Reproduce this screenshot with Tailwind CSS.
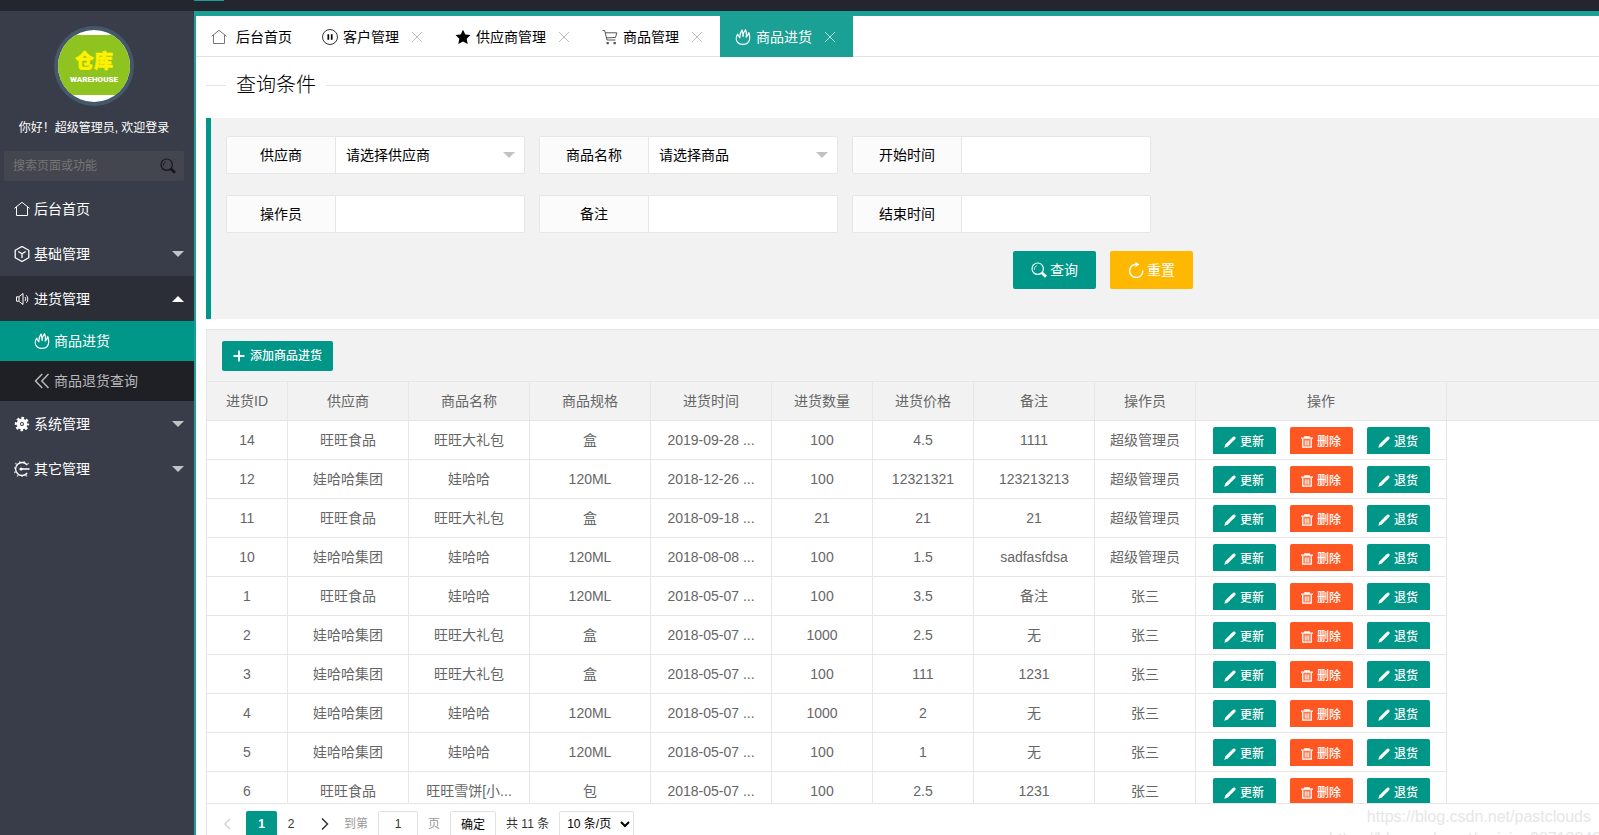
<!DOCTYPE html>
<html lang="zh-CN">
<head>
    <meta charset="UTF-8">
    <meta name="viewport" content="width=device-width, initial-scale=1.0">
    <title>商品进货</title>
    <script src="https://cdn.jsdelivr.net/npm/@tailwindcss/browser@4"></script>
</head>
<body class="relative h-screen flex flex-col overflow-hidden bg-white text-sm text-black font-['Liberation_Sans','Noto_Sans_CJK_SC',sans-serif]">
    <!-- Icons -->
    <svg class="hidden">
        <symbol id="i-home" viewBox="0 0 16 16"><path d="M.5 7.300 8 1.300l7.500 6M2.500 6v8.500h11V6"/></symbol>
        <symbol id="i-pause" viewBox="0 0 16 16"><circle cx="8" cy="8" r="7.500" stroke-width=".8"/><path d="M6.300 5.200v5.600M9.700 5.200v5.600" stroke-width="1.700"/></symbol>
        <symbol id="i-star" viewBox="0 0 16 16"><path fill="currentColor" stroke="none" d="m8 .8 2.300 4.700 5.200.6-3.800 3.600 1 5.300L8 12.400 3.300 15l1-5.300L.5 6.100l5.200-.6z"/></symbol>
        <symbol id="i-cart" viewBox="0 0 16 16"><path d="M.5 1.500h2.200l2.300 9.500h8.500M3.300 3.800h11.500l-1.300 4.700-9 .4"/><path d="M4.500 13h2.300v2.200H4.500zM11.500 13h2.300v2.200h-2.300z" fill="currentColor" stroke="none"/></symbol>
        <symbol id="i-fire" viewBox="0 0 16 16"><path stroke-width="1.200" stroke-linejoin="round" d="M2.800 5.200C.6 8.200.8 11.700 3 13.700c2.600 2.300 7.400 2.300 9.900 0 2.200-2.200 2.200-6.200.9-10.200-.6 2-1.400 3.500-2.600 4.700.5-3.200.3-5.500-.7-7.500C9 2.400 8.300 4.600 8.100 7.400 7.900 5.200 7.600 3 7.200 1 5.500 3 4.700 5.800 4.900 8.800 3.700 7.900 2.900 6.600 2.800 5.200z"/></symbol>
        <symbol id="i-close" viewBox="0 0 12 12"><path d="m1 1 10 10M11 1 1 11"/></symbol>
        <symbol id="i-cube" viewBox="0 0 16 16"><path stroke-width="1.300" stroke-linejoin="round" d="m8 .5 6.800 3.700v7.600L8 15.500l-6.800-3.700V4.200zM4.300 5.500 8 7.800l3.700-2.300M8 7.800V12"/></symbol>
        <symbol id="i-sound" viewBox="0 0 16 16"><path d="M2.500 5.800v4.400h2.300L9 13.500v-11L4.800 5.800zM5 6v4M11 6c1 1 1 3 0 4M12.300 4.300c2 2 2 5.400 0 7.400"/></symbol>
        <symbol id="i-back" viewBox="0 0 16 16"><path stroke-width="1.500" d="M8.200 1 1.500 8l6.700 7M14.500 1 7.800 8l6.700 7"/></symbol>
        <symbol id="i-gear" viewBox="0 0 16 16"><circle cx="8" cy="8" r="3.700" stroke-width="3.400"/><circle cx="8" cy="8" r="6" stroke-width="2.400" stroke-dasharray="2.600 2.110" stroke-dashoffset="1.300"/><circle cx="8" cy="8" r="1" fill="currentColor" stroke="none"/></symbol>
        <symbol id="i-other" viewBox="0 0 16 16"><path stroke-width="1.300" d="M13.200 4A6.500 6.500 0 1 0 13.200 12M7 8h8.500"/><circle cx="7" cy="8" r="1.600" fill="currentColor" stroke="none"/><path stroke-width="2" stroke-dasharray="1.500 3" d="M14.500 3.200A8 8 0 1 0 14.500 12.800" stroke-opacity=".6"/></symbol>
        <symbol id="i-search" viewBox="0 0 16 16"><circle cx="6.700" cy="6.700" r="5.700" stroke-width="1.200"/><path d="M3.600 7.800C3.200 6 4.100 4.300 5.800 3.700" stroke-width=".9"/><path d="m10.800 10.800 4.200 4" stroke-width="2.800"/></symbol>
        <symbol id="i-refresh" viewBox="0 0 16 16"><path stroke-width="1.400" d="M14.800 8.500A6.600 6.600 0 1 1 8.500 2.300"/><path d="m7.500 0 4 2.400-4 2.500z" fill="currentColor" stroke="none"/></symbol>
        <symbol id="i-plus" viewBox="0 0 12 12"><path stroke-width="1.800" d="M6 .5v11M.5 6h11"/></symbol>
        <symbol id="i-edit" viewBox="0 0 12 12"><path fill="currentColor" stroke="none" d="M.3 11.700 1.300 8.500 8 1.800C9 .9 9.600.5 10.400.5c.8.200 1.200.8 1.200 1.400 0 .7-.5 1.300-1.300 2.100L3.500 10.700z"/></symbol>
        <symbol id="i-trash" viewBox="0 0 12 12"><path d="M0 2.200h12M3.800 2V.8h4.400V2" stroke-width="1.300"/><path d="M1.700 2.700v8.500h8.600V2.700" fill="currentColor" fill-opacity=".2" stroke-width="1.200"/><path d="M4.300 4.500v5M6 4.500v5M7.700 4.500v5" stroke-width=".9"/></symbol>
        <symbol id="i-left" viewBox="0 0 8 14"><path stroke-width="1.500" d="M7 2 2 7l5 5"/></symbol>
        <symbol id="i-right" viewBox="0 0 8 14"><path stroke-width="1.500" d="m1 1.500 5.500 5.500L1 12.500"/></symbol>
        <symbol id="i-down" viewBox="0 0 12 6"><path fill="currentColor" stroke="none" d="M0 0h12L6 6z"/></symbol>
        <symbol id="i-up" viewBox="0 0 12 6"><path fill="currentColor" stroke="none" d="M0 6h12L6 0z"/></symbol>
    </svg>

    <!-- Top bar -->
    <header class="h-[11px] shrink-0 bg-[#23262e]">
        <div class="ml-[194px] w-[30px] h-px bg-[#1aa094]"></div>
    </header>

    <div class="flex flex-1 min-h-0">
        <!-- Side menu -->
        <aside class="w-[194px] shrink-0 bg-[#393d49] text-white">
            <div class="h-[175px] pl-1 pr-2.5 pt-[15px] flex flex-col items-center">
                <svg class="w-20 h-20 shrink-0" viewBox="0 0 80 80">
                    <defs><clipPath id="face"><circle cx="40" cy="40" r="36"/></clipPath></defs>
                    <circle cx="40" cy="40" r="40" fill="#44576b"/>
                    <g clip-path="url(#face)">
                        <rect width="80" height="80" fill="#fff"/>
                        <rect y="9" width="80" height="60" fill="#8fc31f"/>
                    </g>
                    <text x="40" y="42" text-anchor="middle" font-size="19" font-weight="900" fill="#fff100" stroke="#fff100" stroke-width=".5" font-family="Noto Sans CJK SC">仓库</text>
                    <text x="40" y="56" text-anchor="middle" font-size="8" font-weight="900" fill="#fff" font-family="Roboto">WAREHOUSE</text>
                </svg>
                <p class="mt-3 text-xs leading-5">你好！超级管理员, 欢迎登录</p>
                <div class="mt-[13px] w-full h-[30px] shrink-0 flex items-center rounded-xs bg-[#43464f] pr-2">
                    <input type="text" aria-label="搜索页面或功能" placeholder="搜索页面或功能" class="flex-1 min-w-0 h-full pl-[9px] text-xs outline-none placeholder:text-[#757575]">
                    <button type="button" aria-label="搜索" class="text-[#16171b]"><svg class="w-4 h-4 fill-none stroke-current"><use href="#i-search"/></svg></button>
                </div>
            </div>
            <nav>
                <a href="#" class="flex items-center h-[45px] pl-3.5 pr-2.5"><svg class="w-4 h-4 mr-1 fill-none stroke-current"><use href="#i-home"/></svg>后台首页</a>
                <a href="#" class="flex items-center h-[45px] pl-3.5 pr-2.5"><svg class="w-4 h-4 mr-1 fill-none stroke-current"><use href="#i-cube"/></svg>基础管理<svg class="w-3 h-1.5 ml-auto text-[#c2c3c6]"><use href="#i-down"/></svg></a>
                <a href="#" class="flex items-center h-[45px] pl-3.5 pr-2.5 bg-[#2b2e37]"><svg class="w-4 h-4 mr-1 fill-none stroke-current"><use href="#i-sound"/></svg>进货管理<svg class="w-3 h-1.5 ml-auto"><use href="#i-up"/></svg></a>
                <a href="#" class="flex items-center h-10 pl-[34px] bg-[#009688]"><svg class="w-4 h-4 mr-1 fill-none stroke-current"><use href="#i-fire"/></svg>商品进货</a>
                <a href="#" class="flex items-center h-10 pl-[34px] bg-[#1f2025] text-[#b8b8ba]"><svg class="w-4 h-4 mr-1 fill-none stroke-current"><use href="#i-back"/></svg>商品退货查询</a>
                <a href="#" class="flex items-center h-[45px] pl-3.5 pr-2.5"><svg class="w-4 h-4 mr-1 fill-none stroke-current"><use href="#i-gear"/></svg>系统管理<svg class="w-3 h-1.5 ml-auto text-[#c2c3c6]"><use href="#i-down"/></svg></a>
                <a href="#" class="flex items-center h-[45px] pl-3.5 pr-2.5"><svg class="w-4 h-4 mr-1 fill-none stroke-current"><use href="#i-other"/></svg>其它管理<svg class="w-3 h-1.5 ml-auto text-[#c2c3c6]"><use href="#i-down"/></svg></a>
            </nav>
        </aside>

        <main class="flex-1 min-w-0 flex flex-col border-l-2 border-t-5 border-[#1aa094]">
            <!-- Page tabs -->
            <div class="flex h-[41px] shrink-0 border-b border-[#e2e2e2]">
                <a href="#" class="flex items-center h-[41px] px-[15px]"><svg class="w-4 h-4 mr-[9px] fill-none stroke-[#777]"><use href="#i-home"/></svg>后台首页</a>
                <div class="flex items-center h-[41px] pl-[15px] pr-[17px]"><svg class="w-4 h-4 mr-[5px] fill-none stroke-current"><use href="#i-pause"/></svg><a href="#">客户管理</a><button type="button" aria-label="关闭" class="ml-3"><svg class="w-3 h-3 fill-none stroke-[#bbb]"><use href="#i-close"/></svg></button></div>
                <div class="flex items-center h-[41px] pl-[15px] pr-[17px]"><svg class="w-4 h-4 mr-[5px] fill-none stroke-current"><use href="#i-star"/></svg><a href="#">供应商管理</a><button type="button" aria-label="关闭" class="ml-3"><svg class="w-3 h-3 fill-none stroke-[#bbb]"><use href="#i-close"/></svg></button></div>
                <div class="flex items-center h-[41px] pl-[15px] pr-[17px]"><svg class="w-4 h-4 mr-[5px] fill-none stroke-[#555] text-[#555]"><use href="#i-cart"/></svg><a href="#">商品管理</a><button type="button" aria-label="关闭" class="ml-3"><svg class="w-3 h-3 fill-none stroke-[#bbb]"><use href="#i-close"/></svg></button></div>
                <div class="flex items-center h-[41px] pl-[15px] pr-[17px] bg-[#1aa094] text-white"><svg class="w-4 h-4 mr-[5px] fill-none stroke-current"><use href="#i-fire"/></svg><a href="#">商品进货</a><button type="button" aria-label="关闭" class="ml-3"><svg class="w-3 h-3 fill-none stroke-[#b5dfdb]"><use href="#i-close"/></svg></button></div>
            </div>

            <div class="flex-1 min-h-0 flex flex-col pl-2.5 pt-[13px]">
                <fieldset class="shrink-0 border-t border-[#e2e2e2]">
                    <legend class="ml-5 px-2.5 text-xl leading-[30px] font-light">查询条件</legend>
                </fieldset>

                <!-- Search form -->
                <form id="searchForm" class="mt-[18px] shrink-0 border-l-5 border-[#009688] bg-[#f2f2f2] pl-[15px] pt-[18px] pb-[30px]">
                    <div class="grid grid-cols-[repeat(3,299px)] gap-x-3.5 gap-y-[21px]">
                        <div class="relative flex h-[38px] border border-[#e6e6e6] rounded-xs bg-white">
                            <label for="provider" class="w-[109px] shrink-0 border-r border-[#e6e6e6] bg-[#fbfbfb] text-center leading-9">供应商</label>
                            <select id="provider" class="flex-1 min-w-0 appearance-none pl-2.5 outline-none"><option>请选择供应商</option></select>
                            <svg class="absolute right-[9px] top-[15px] w-3 h-1.5 text-[#c2c2c2] pointer-events-none"><use href="#i-down"/></svg>
                        </div>
                        <div class="relative flex h-[38px] border border-[#e6e6e6] rounded-xs bg-white">
                            <label for="goods" class="w-[109px] shrink-0 border-r border-[#e6e6e6] bg-[#fbfbfb] text-center leading-9">商品名称</label>
                            <select id="goods" class="flex-1 min-w-0 appearance-none pl-2.5 outline-none"><option>请选择商品</option></select>
                            <svg class="absolute right-[9px] top-[15px] w-3 h-1.5 text-[#c2c2c2] pointer-events-none"><use href="#i-down"/></svg>
                        </div>
                        <div class="flex h-[38px] border border-[#e6e6e6] rounded-xs bg-white">
                            <label for="startTime" class="w-[109px] shrink-0 border-r border-[#e6e6e6] bg-[#fbfbfb] text-center leading-9">开始时间</label>
                            <input type="text" id="startTime" class="flex-1 min-w-0 pl-2.5 outline-none">
                        </div>
                        <div class="flex h-[38px] border border-[#e6e6e6] rounded-xs bg-white">
                            <label for="operator" class="w-[109px] shrink-0 border-r border-[#e6e6e6] bg-[#fbfbfb] text-center leading-9">操作员</label>
                            <input type="text" id="operator" class="flex-1 min-w-0 pl-2.5 outline-none">
                        </div>
                        <div class="flex h-[38px] border border-[#e6e6e6] rounded-xs bg-white">
                            <label for="remark" class="w-[109px] shrink-0 border-r border-[#e6e6e6] bg-[#fbfbfb] text-center leading-9">备注</label>
                            <input type="text" id="remark" class="flex-1 min-w-0 pl-2.5 outline-none">
                        </div>
                        <div class="flex h-[38px] border border-[#e6e6e6] rounded-xs bg-white">
                            <label for="endTime" class="w-[109px] shrink-0 border-r border-[#e6e6e6] bg-[#fbfbfb] text-center leading-9">结束时间</label>
                            <input type="text" id="endTime" class="flex-1 min-w-0 pl-2.5 outline-none">
                        </div>
                    </div>
                    <div class="mt-[18px] ml-[787px] flex gap-3.5 text-white">
                        <button type="submit" class="flex items-center justify-center w-[83px] h-[38px] rounded-xs bg-[#009688]"><svg class="w-4 h-4 mr-[3px] fill-none stroke-current"><use href="#i-search"/></svg>查询</button>
                        <button type="reset" class="flex items-center justify-center w-[83px] h-[38px] rounded-xs bg-[#ffb800]"><svg class="w-4 h-4 mr-[3px] fill-none stroke-current"><use href="#i-refresh"/></svg>重置</button>
                    </div>
                </form>

                <!-- Purchase list -->
                <section class="mt-2.5 flex-1 min-h-0 flex flex-col border-l border-t border-[#e6e6e6] text-[#666]">
                    <div class="shrink-0 h-[52px] pl-[15px] pt-[11px] bg-[#f2f2f2] border-b border-[#e6e6e6]">
                        <button type="button" class="flex items-center justify-center w-[111px] h-[30px] rounded-xs bg-[#009688] text-xs font-medium text-white"><svg class="w-3 h-3 mr-[5px] fill-none stroke-current"><use href="#i-plus"/></svg>添加商品进货</button>
                    </div>
                    <div class="flex-1 min-h-0 overflow-hidden">
                        <table class="w-full table-fixed border-separate border-spacing-0 text-center">
                            <colgroup>
                                <col class="w-[81px]"><col class="w-[121px]"><col class="w-[121px]"><col class="w-[121px]"><col class="w-[121px]"><col class="w-[101px]"><col class="w-[101px]"><col class="w-[121px]"><col class="w-[101px]"><col class="w-[251px]"><col>
                            </colgroup>
                            <thead class="bg-[#f2f2f2]">
                                <tr id="head" class="h-[39px]"></tr>
                            </thead>
                            <tbody id="rows"></tbody>
                        </table>
                    </div>
                    <!-- Pagination -->
                    <div class="shrink-0 h-8 pt-[7px] flex overflow-hidden border-t border-[#e6e6e6] text-xs leading-[26px] text-[#333]">
                        <a href="#" aria-label="上一页" class="w-[39px] h-[26px] flex items-center justify-center text-[#d2d2d2]"><svg class="w-2 h-3.5 fill-none stroke-current"><use href="#i-left"/></svg></a>
                        <a href="#" class="w-[31px] h-[26px] rounded-t-xs bg-[#009688] text-center font-bold text-white">1</a>
                        <a href="#" class="w-7 h-[26px] text-center">2</a>
                        <a href="#" aria-label="下一页" class="w-[39px] h-[26px] flex items-center justify-center"><svg class="w-2 h-3.5 fill-none stroke-current"><use href="#i-right"/></svg></a>
                        <label for="page" class="text-[#999]">到第</label>
                        <input type="text" id="page" value="1" class="mx-2.5 w-10 h-[26px] border border-[#e2e2e2] rounded-xs text-center outline-none">
                        <span class="text-[#999]">页</span>
                        <button type="button" class="ml-2.5 w-[46px] h-[26px] border border-[#e2e2e2] rounded-xs text-black">确定</button>
                        <span class="ml-2.5">共 11 条</span>
                        <select aria-label="每页条数" class="ml-2.5 w-[75px] h-[26px] px-[3px] border border-[#e2e2e2] rounded-xs text-black"><option>10 条/页</option></select>
                    </div>
                </section>
            </div>
        </main>
    </div>

    <div class="absolute right-0 -bottom-[15px] w-[270px] text-base leading-[22px] whitespace-nowrap text-[#e6e6e6] pointer-events-none">
        <p class="pr-2 text-right">https://blog.csdn.net/pastclouds</p>
        <p>https://blog.csdn.net/weixin_38713848</p>
    </div>

    <script>
        const columns = ['进货ID', '供应商', '商品名称', '商品规格', '进货时间', '进货数量', '进货价格', '备注', '操作员', '操作'];
        const inports = [
            [14, '旺旺食品', '旺旺大礼包', '盒', '2019-09-28 ...', 100, '4.5', '1111', '超级管理员'],
            [12, '娃哈哈集团', '娃哈哈', '120ML', '2018-12-26 ...', 100, '12321321', '123213213', '超级管理员'],
            [11, '旺旺食品', '旺旺大礼包', '盒', '2018-09-18 ...', 21, '21', '21', '超级管理员'],
            [10, '娃哈哈集团', '娃哈哈', '120ML', '2018-08-08 ...', 100, '1.5', 'sadfasfdsa', '超级管理员'],
            [1, '旺旺食品', '娃哈哈', '120ML', '2018-05-07 ...', 100, '3.5', '备注', '张三'],
            [2, '娃哈哈集团', '旺旺大礼包', '盒', '2018-05-07 ...', 1000, '2.5', '无', '张三'],
            [3, '娃哈哈集团', '旺旺大礼包', '盒', '2018-05-07 ...', 100, '111', '1231', '张三'],
            [4, '娃哈哈集团', '娃哈哈', '120ML', '2018-05-07 ...', 1000, '2', '无', '张三'],
            [5, '娃哈哈集团', '娃哈哈', '120ML', '2018-05-07 ...', 100, '1', '无', '张三'],
            [6, '旺旺食品', '旺旺雪饼[小...', '包', '2018-05-07 ...', 100, '2.5', '1231', '张三']
        ];

        const actions = `
            <div class="flex justify-center gap-3.5 h-7 pt-px text-xs font-medium text-white">
                <button type="button" class="flex items-center justify-center w-[63px] h-[27px] pt-0.5 rounded-t-xs bg-[#009688]"><svg class="w-3 h-3 mr-1 fill-none stroke-current"><use href="#i-edit"/></svg>更新</button>
                <button type="button" class="flex items-center justify-center w-[63px] h-[27px] pt-0.5 rounded-t-xs bg-[#ff5722]"><svg class="w-3 h-3 mr-1 fill-none stroke-current"><use href="#i-trash"/></svg>删除</button>
                <button type="button" class="flex items-center justify-center w-[63px] h-[27px] pt-0.5 rounded-t-xs bg-[#009688]"><svg class="w-3 h-3 mr-1 fill-none stroke-current"><use href="#i-edit"/></svg>退货</button>
            </div>`;

        document.getElementById('head').innerHTML = columns
            .map(name => `<th class="border-r border-b border-[#e6e6e6] font-normal">${name}</th>`)
            .join('') + '<th class="border-b border-[#e6e6e6]"></th>';

        document.getElementById('rows').innerHTML = inports.map(row => `
            <tr class="h-[39px]">
                ${row.map(value => `<td class="px-2 border-r border-b border-[#e6e6e6] truncate">${value}</td>`).join('')}
                <td class="border-r border-b border-[#e6e6e6]">${actions}</td>
                <td></td>
            </tr>`).join('');

        document.getElementById('searchForm').addEventListener('submit', (e) => {
            e.preventDefault();
        });
    </script>
</body>
</html>
